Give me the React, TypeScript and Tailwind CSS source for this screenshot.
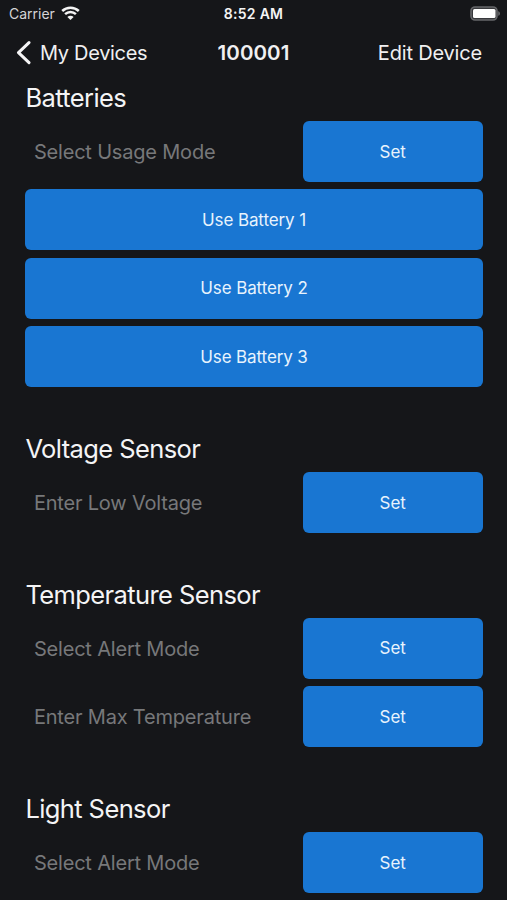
import type { ReactNode } from "react";

function Heading({ children }: { children: ReactNode }) {
  return (
    <h2 className="h-[46px] text-[25.5px] leading-[46px] font-normal tracking-[-0.6px] text-[#f4f4f5]">
      {children}
    </h2>
  );
}

function ActionButton({ children }: { children: ReactNode }) {
  return (
    <button className="flex h-[60.8px] w-full items-center justify-center rounded-[6px] bg-[#1976d2] pt-[2px] text-[17px] tracking-[-0.11px] text-[#e8f3fd]">
      {children}
    </button>
  );
}

function Field({ label }: { label: string }) {
  return (
    <div className="flex items-center justify-between">
      <span className="pt-px pl-[8.5px] text-[20px] tracking-[-0.19px] text-[#77787a]">{label}</span>
      <div className="w-[180px]">
        <ActionButton>Set</ActionButton>
      </div>
    </div>
  );
}

function Section({ title, children }: { title: string; children: ReactNode }) {
  return (
    <section>
      <Heading>{title}</Heading>
      <div className="flex flex-col gap-[7.6px]">{children}</div>
    </section>
  );
}

function StatusBar() {
  return (
    <div className="grid h-[26px] grid-cols-3 items-center pt-px text-[14px]">
      <div className="flex items-center gap-[6px] pl-[9px] text-[#d4d4d6]">
        <span>Carrier</span>
        <svg width="19" height="15" viewBox="0 0 19 15" fill="none" stroke="#f4f4f5" strokeWidth="2.5">
          <path d="M1.2 5a12 12 0 0 1 16.6 0" />
          <path d="M4.1 8.2a7.8 7.8 0 0 1 10.8 0" />
          <path d="M9.5 14 6.4 11a4.4 4.4 0 0 1 6.2 0Z" fill="#f4f4f5" stroke="none" />
        </svg>
      </div>
      <span className="text-center font-semibold tracking-[0.3px] text-[#f4f4f5]">8:52 AM</span>
      <svg className="mr-[6px] justify-self-end" width="31" height="15" viewBox="0 0 31 15">
        <rect x="1" y="1" width="26" height="13" rx="4" fill="#38393c" stroke="#66676a" strokeWidth="1.6" />
        <rect x="3" y="3" width="22.5" height="9" rx="1.5" fill="#ffffff" />
        <path d="M28.2 5.2c2.4.7 2.4 3.9 0 4.6Z" fill="#66676a" />
      </svg>
    </div>
  );
}

function NavBar() {
  return (
    <nav className="grid h-[53px] grid-cols-[1fr_auto_1fr] items-center text-[20px] text-[#f0f0f1]">
      <div className="flex items-center gap-[9px] pl-[16px]">
        <svg width="15" height="24" viewBox="0 0 15 24" fill="none" stroke="#f4f4f5" strokeWidth="3" strokeLinecap="round" strokeLinejoin="round">
          <path d="M13 1.6 2.5 11.6 13 21.6" />
        </svg>
        <span className="tracking-[-0.32px]">My Devices</span>
      </div>
      <span className="pt-[2px] text-[20.5px] font-semibold tracking-[0.1px]">100001</span>
      <span className="pr-[25px] text-right tracking-[-0.18px]">Edit Device</span>
    </nav>
  );
}

export default function App() {
  return (
    <div className="h-[900px] w-[507px] overflow-hidden bg-[#151619] font-['Inter','Liberation_Sans',sans-serif]">
      <StatusBar />
      <NavBar />
      <main className="-mt-1 flex flex-col gap-[39px] pr-[24.4px] pl-[25.4px]">
        <Section title="Batteries">
          <Field label="Select Usage Mode" />
          <ActionButton>Use Battery 1</ActionButton>
          <ActionButton>Use Battery 2</ActionButton>
          <ActionButton>Use Battery 3</ActionButton>
        </Section>
        <Section title="Voltage Sensor">
          <Field label="Enter Low Voltage" />
        </Section>
        <Section title="Temperature Sensor">
          <Field label="Select Alert Mode" />
          <Field label="Enter Max Temperature" />
        </Section>
        <Section title="Light Sensor">
          <Field label="Select Alert Mode" />
        </Section>
      </main>
    </div>
  );
}
